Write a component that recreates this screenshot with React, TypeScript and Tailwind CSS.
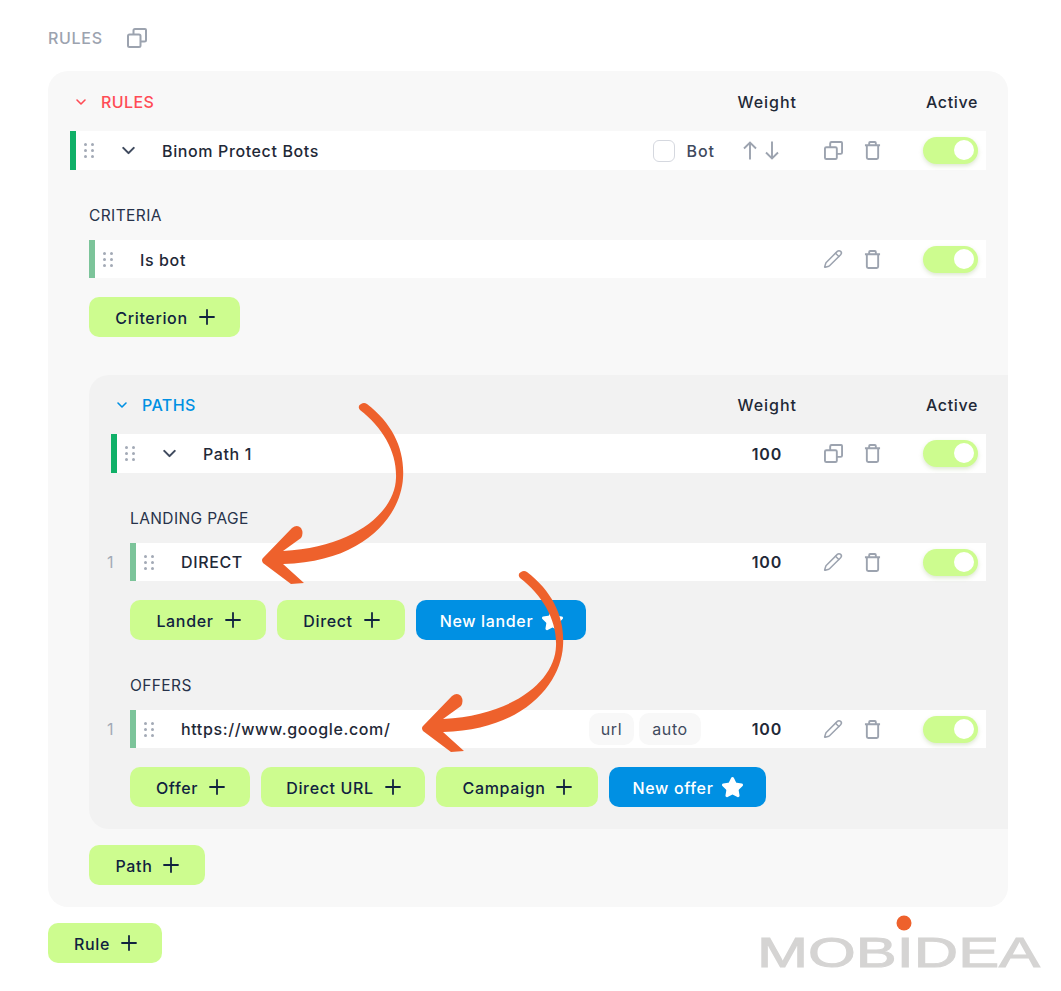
import { ChevronDown, Pencil, Plus, Star } from "lucide-react";
import type { ReactNode } from "react";

function CopyIcon({ className }: { className: string }) {
  return (
    <svg viewBox="0 0 20 20" fill="none" stroke="currentColor" strokeWidth="2" strokeLinejoin="round" className={className}>
      <rect x="1" y="6.5" width="12.5" height="12.5" rx="1.5" />
      <path d="M6.5 6.5V2.5A1.5 1.5 0 0 1 8 1h10a1 1 0 0 1 1 1v10a1.5 1.5 0 0 1-1.5 1.5h-4" />
    </svg>
  );
}

function TrashIcon() {
  return (
    <svg viewBox="0 0 18 20" fill="none" stroke="currentColor" strokeWidth="2" strokeLinejoin="round" className="-ml-[1px] h-[19px] w-[17px] text-[#9ca3af]">
      <path d="M1 4.5h16M5.5 4.5V2a1 1 0 0 1 1-1h5a1 1 0 0 1 1 1v2.5" />
      <path d="M3 4.5V17.5A1.5 1.5 0 0 0 4.5 19h9a1.5 1.5 0 0 0 1.5-1.5V4.5" />
    </svg>
  );
}

function LongArrow({ down }: { down?: boolean }) {
  return (
    <svg viewBox="0 0 14 19" fill="none" stroke="currentColor" strokeWidth="1.9" className={`h-[19px] w-[14px] ${down ? "rotate-180" : ""}`}>
      <path d="M7 18.5V1.5M1 7.5l6-6 6 6" />
    </svg>
  );
}

function Dots() {
  return (
    <div className="grid w-[10px] grid-cols-2 gap-x-[4px] gap-y-[3px]">
      {[0, 1, 2, 3, 4, 5].map((i) => (
        <span key={i} className="h-[3px] w-[3px] rounded-full bg-[#a3aab6]" />
      ))}
    </div>
  );
}

function Toggle() {
  return (
    <div className="relative h-[27px] w-[55px] shrink-0 rounded-full bg-[#cdfc8f] shadow-[0_2px_4px_rgba(120,160,70,0.25)]">
      <span className="absolute right-[4px] top-[3px] h-[20px] w-[20px] rounded-full bg-white" />
    </div>
  );
}

function IconCell({ children }: { children: ReactNode }) {
  return <div className="flex h-full w-[40px] shrink-0 items-center justify-center">{children}</div>;
}

function Row({
  bar,
  label,
  copy,
  middle,
  weight,
  height,
  labelPad,
  chevron,
  num,
}: {
  bar: string;
  label: string;
  copy?: boolean;
  middle?: ReactNode;
  weight?: ReactNode;
  height: string;
  labelPad: string;
  chevron?: boolean;
  num?: boolean;
}) {
  return (
    <div className="flex items-center">
      {num && <span className="-ml-[30px] w-[30px] pl-[7px] text-[16px] text-[#a3aab6]">1</span>}
      <div className={`flex flex-1 items-center bg-white pr-[8px] ${height}`}>
        <div className={`h-full w-[6px] shrink-0 ${bar}`} />
        <div className="ml-[8px] flex shrink-0"><Dots /></div>
        {chevron && (
          <div className="ml-[11px] -mr-[1px] flex w-[46px] shrink-0 justify-center">
            <ChevronDown className="h-[21px] w-[21px] text-[#3f4a5e]" strokeWidth={2.4} />
          </div>
        )}
        <span className={`flex-1 truncate text-[16px] font-medium tracking-[0.62px] text-[#1f2937] ${labelPad}`}>{label}</span>
        {middle}
        <div className="flex w-[60px] shrink-0 justify-center text-[16px] font-semibold tracking-[0.9px] text-[#1f2937]">{weight}</div>
        <div className="ml-[16px] flex h-full items-center">
          <IconCell>
            {copy ? <CopyIcon className="h-[19px] w-[19px] text-[#9ca3af]" /> : <Pencil className="h-[20px] w-[20px] text-[#9ca3af]" strokeWidth={1.8} />}
          </IconCell>
          <IconCell><TrashIcon /></IconCell>
        </div>
        <div className="ml-[30px]"><Toggle /></div>
      </div>
    </div>
  );
}

function Btn({ label, width, blue }: { label: string; width: string; blue?: boolean }) {
  return (
    <div
      className={`flex h-[40px] shrink-0 items-center justify-center rounded-[10px] text-[16px] font-medium tracking-[0.65px] ${width} ${
        blue ? "gap-[10px] bg-[#0090e3] text-white" : "gap-[12px] bg-[#cdfc8f] text-[#10223f]"
      }`}
    >
      <span className="pt-[2px]">{label}</span>
      {blue ? (
        <Star className="-mx-[2px] h-[23px] w-[23px] fill-white text-white" />
      ) : (
        <Plus className="-mx-[5px] h-[24px] w-[24px]" strokeWidth={1.8} />
      )}
    </div>
  );
}

function Head({ title, color }: { title: string; color: string }) {
  return (
    <div className={`flex h-[24px] items-center ${color}`}>
      <ChevronDown className="ml-[3px] h-[16px] w-[16px] shrink-0" strokeWidth={2.4} />
      <span className="ml-[12px] flex-1 text-[16px] font-medium tracking-[0.4px]">{title}</span>
      <span className="mr-[129px] text-[16px] font-medium tracking-[0.95px] text-[#1f2937]">Weight</span>
      <span className="mr-[8px] text-[16px] font-medium tracking-[0.65px] text-[#1f2937]">Active</span>
    </div>
  );
}

function Caption({ text }: { text: string }) {
  return <div className="mb-[12px] mt-[34px] h-[24px] text-[15.5px] leading-[24px] tracking-[0.4px] text-[#27324a]">{text}</div>;
}

function Arrow({ className }: { className: string }) {
  return (
    <svg viewBox="0 0 155 190" className={`pointer-events-none absolute h-[190px] w-[155px] ${className}`}>
      <path
        fill="#ee612c"
        d="M112 4C138 24 150 50 148 78C146 115 110 162 28 164L49 183L36 184L8 163Q6 160 8 158L37 128Q42 124 46 128Q49 133 46 138L28 151C100 147 140 112 141 78C142 52 128 28 105 10Q102 6 106 4Q109 2 112 4Z"
      />
    </svg>
  );
}

export default function App() {
  return (
    <div className="relative h-[991px] w-[1061px] overflow-hidden bg-white pl-[48px] pt-[26px] font-['Inter','Noto_Sans',sans-serif]">
      <div className="flex h-[24px] items-center text-[16px] font-medium tracking-[0.7px] text-[#9ca3af]">
        <span>RULES</span>
        <CopyIcon className="ml-[24px] h-[20px] w-[20px]" />
      </div>

      <div className="mt-[21px] w-[960px] rounded-[20px] bg-[#f8f8f8] pb-[22px] pl-[22px] pr-[22px] pt-[19px]">
        <Head title="RULES" color="text-[#ff4b55]" />
        <div className="mt-[17px]">
          <Row
            bar="bg-[#10b068]"
            label="Binom Protect Bots"
            height="h-[39px]"
            chevron
            labelPad="pl-[12px]"
            copy
            middle={
              <div className="mr-[22px] flex items-center">
                <span className="h-[22px] w-[22px] rounded-[6px] border border-[#d5d8df] bg-white" />
                <span className="ml-[11px] text-[16px] font-medium tracking-[1px] text-[#3f4a5e]">Bot</span>
              </div>
            }
            weight={
              <div className="-ml-[13px] flex gap-[8px] text-[#9ca3af]">
                <LongArrow />
                <LongArrow down />
              </div>
            }
          />
        </div>

        <div className="pl-[19px]">
          <Caption text="CRITERIA" />
          <Row bar="bg-[#7cc49a]" label="Is bot" height="h-[38px]" labelPad="pl-[27px] pt-[2px]" />
          <div className="mt-[19px] flex"><Btn label="Criterion" width="w-[151px]" /></div>

          <div className="-mr-[22px] mt-[38px] rounded-l-[20px] bg-[#f2f2f2] pb-[22px] pl-[22px] pr-[22px] pt-[18px]">
            <Head title="PATHS" color="text-[#0090e3]" />
            <div className="mt-[17px]">
              <Row bar="bg-[#10b068]" label="Path 1" height="h-[39px]" chevron labelPad="pl-[12px]" weight="100" copy />
            </div>
            <div className="pl-[19px]">
              <Caption text="LANDING PAGE" />
              <Row num bar="bg-[#7cc49a]" label="DIRECT" height="h-[38px]" labelPad="pl-[27px]" weight="100" />
              <div className="mt-[19px] flex gap-[11px]">
                <Btn label="Lander" width="w-[136px]" />
                <Btn label="Direct" width="w-[128px]" />
                <Btn blue label="New lander" width="w-[170px]" />
              </div>
              <Caption text="OFFERS" />
              <Row
                num
                bar="bg-[#7cc49a]"
                label="https://www.google.com/"
                height="h-[38px]"
                labelPad="pl-[27px]"
                weight="100"
                middle={
                  <div className="mr-[36px] flex gap-[5px] text-[16px] tracking-[0.6px] text-[#3f4a5e]">
                    <span className="flex h-[32px] w-[45px] items-center justify-center rounded-[10px] bg-[#f8f8f8]">url</span>
                    <span className="flex h-[32px] w-[62px] items-center justify-center rounded-[10px] bg-[#f8f8f8]">auto</span>
                  </div>
                }
              />
              <div className="mt-[19px] flex gap-[11px]">
                <Btn label="Offer" width="w-[120px]" />
                <Btn label="Direct URL" width="w-[164px]" />
                <Btn label="Campaign" width="w-[162px]" />
                <Btn blue label="New offer" width="w-[157px]" />
              </div>
            </div>
          </div>

          <div className="mt-[16px] flex"><Btn label="Path" width="w-[116px]" /></div>
        </div>
      </div>

      <div className="mt-[16px] flex"><Btn label="Rule" width="w-[114px]" /></div>

      <Arrow className="left-[255px] top-[400px]" />
      <Arrow className="left-[415px] top-[568px]" />

      <svg viewBox="0 0 311 86" className="absolute left-[750px] top-[905px] h-[86px] w-[311px]">
        <circle cx="154" cy="18" r="7.5" fill="#ee612c" />
        <text
          x="7"
          y="62"
          textLength="283"
          lengthAdjust="spacingAndGlyphs"
          fontFamily="'Liberation Sans', sans-serif"
          fontSize="43"
          fill="#d5d4d3"
          stroke="#d5d4d3"
          strokeWidth="1"
        >
          MOBIDEA
        </text>
      </svg>
    </div>
  );
}
